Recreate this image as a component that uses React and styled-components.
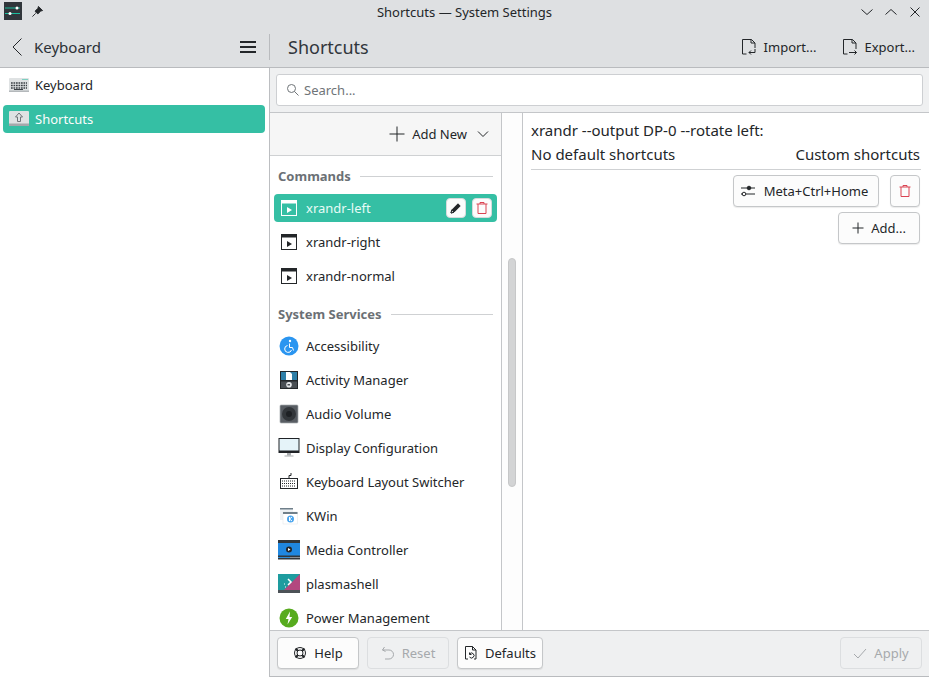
import React from 'react';
import styled, { createGlobalStyle } from 'styled-components';

const Global = createGlobalStyle`
  html, body { margin: 0; padding: 0; height: 100%; }
  body { font-family: "Noto Sans", "Open Sans", sans-serif; font-size: 13px; color: #232629; overflow: hidden; background: #eff0f1; }
  #root { height: 100%; }
  * { box-sizing: border-box; }
`;

const Win = styled.div`display: flex; flex-direction: column; width: 929px; height: 677px; background: #eff0f1;`;
const TitleBar = styled.div`position: relative; display: flex; align-items: center; height: 28px; padding: 0 4px 2px; background: #dee0e2; flex: none;`;
const AppIcon = styled.svg`width: 18px; height: 18px; display: block; margin-top: -4px;`;
const PinIcon = styled.svg`width: 13px; height: 13px; margin: -3px 0 0 9px; display: block;`;
const Title = styled.div`position: absolute; left: 0; right: 0; top: 3px; text-align: center; font-size: 13px; line-height: 18px; color: #232629;`;
const WinBtns = styled.div`margin-left: auto; display: flex; gap: 10px; padding-right: 3px; margin-top: -2px;`;
const WinBtn = styled.svg`width: 14px; height: 14px; display: block; fill: none; stroke: #232629; stroke-width: 1;`;

const Header = styled.div`display: flex; height: 40px; background: #dee0e2; border-bottom: 1px solid #b9bbbe; flex: none; padding-bottom: 1px;`;
const HeaderLeft = styled.div`width: 269px; display: flex; align-items: center; padding: 0 13px 0 11px; flex: none;`;
const Crumb = styled.span`font-size: 15px; margin-left: 5px; line-height: 20px; color: #2b3036;`;
const Hamburger = styled.svg`width: 16px; height: 12px; margin-left: auto; display: block;`;
const HeaderRight = styled.div`flex: 1; display: flex; align-items: center; padding: 0 14px 0 18px;`;
const Sep = styled.div`width: 1px; height: 26px; background: #b9bbbe; align-self: center; flex: none;`;
const PageTitle = styled.div`font-size: 18px; line-height: 24px; color: #31363b; flex: 1;`;
const HeadAction = styled.div`display: flex; align-items: center; gap: 7px; font-size: 13px; margin-left: 25px; line-height: 18px;`;
const Icon = styled.svg`width: ${p => p.$s || 16}px; height: ${p => p.$s || 16}px; display: block; flex: none; fill: none; stroke: ${p => p.$c || '#232629'}; stroke-width: 1;`;

const Body = styled.div`flex: 1; display: flex; min-height: 0;`;
const Sidebar = styled.div`width: 270px; flex: none; background: #fff; border-right: 1px solid #bcbec1; padding: 3px 4px 0 3px; display: flex; flex-direction: column;`;
const SideItem = styled.div`height: 28px; border-radius: 4px; display: flex; align-items: center; padding-left: 5px; gap: 5px; color: ${p => p.$active ? '#fcfcfc' : '#232629'}; background: ${p => p.$active ? '#35bfa4' : 'transparent'}; margin-bottom: 6px;`;
const Main = styled.div`flex: 1; display: flex; flex-direction: column; min-width: 0;`;
const SearchBar = styled.div`height: 45px; padding: 6px; border-bottom: 1px solid #c4c6c9; flex: none; background: #eff0f1;`;
const SearchField = styled.div`height: 32px; background: #fff; border: 1px solid #cdcfd2; border-radius: 3px; display: flex; align-items: center; padding-left: 9px; gap: 4px; color: #6f7478; font-size: 13px;`;
const Panes = styled.div`flex: 1; display: flex; min-height: 0; background: #fff;`;
const ListPane = styled.div`width: 232px; flex: none; border-right: 1px solid #c4c6c9; display: flex; flex-direction: column; min-height: 0; overflow: hidden;`;
const AddBar = styled.div`height: 43px; flex: none; background: #f6f6f6; border-bottom: 1px solid #cfd1d3; display: flex; align-items: center; justify-content: flex-end; padding-right: 12px;`;
const AddLabel = styled.span`margin: 0 10px 0 7px; font-size: 13px; color: #232629;`;
const List = styled.div`flex: 1; padding: 0 4px; overflow: hidden;`;
const SectionHead = styled.div`display: flex; align-items: center; gap: 9px; height: 18px; padding: 0 4px; margin: ${p => p.$first ? '11px' : '15px'} 0 9px; font-weight: 700; font-size: 13px; color: #6b7075;`;
const SectionRule = styled.div`flex: 1; height: 1px; background: #cfd1d3;`;
const Row = styled.div`height: 28px; margin-bottom: 6px; border-radius: 4px; display: flex; align-items: center; padding: 0 2px 0 4px; gap: 6px; color: ${p => p.$active ? '#e7fbf6' : '#232629'}; background: ${p => p.$active ? '#35bfa4' : 'transparent'};`;
const RowLabel = styled.span`flex: 1; line-height: 18px;`;
const MiniBtn = styled.div`width: 20px; height: 20px; background: #fcfcfc; border-radius: 4px; border: 1px solid #d8dadc; display: flex; align-items: center; justify-content: center;`;
const MiniRow = styled.div`display: flex; gap: 6px; margin-right: 3px;`;
const ScrollCol = styled.div`width: 21px; flex: none; border-right: 1px solid #c4c6c9; background: #fdfdfd; padding: 145px 1px 0; display: flex; justify-content: center;`;
const Thumb = styled.div`width: 8px; height: 229px; background: #d3d4d5; border: 1px solid #c6c7c8; border-radius: 4px;`;
const Detail = styled.div`flex: 1; padding: 7px 8px 0 8px; min-width: 0;`;
const CmdLine = styled.div`font-size: 15px; line-height: 20px; color: #232629;`;
const ColHead = styled.div`display: flex; justify-content: space-between; font-size: 15px; line-height: 20px; height: 29px; padding: 3px 1px 0 0; border-bottom: 1px solid #cfd1d3; margin-top: 1px;`;
const ShortcutRow = styled.div`display: flex; justify-content: flex-end; align-items: center; gap: 11px; margin-top: 5px; padding-right: 1px;`;
const Btn = styled.div`height: 32px; width: ${p => p.$w}px; border: 1px solid ${p => p.$off ? '#dcdee0' : '#c5c7c9'}; border-radius: 4px; background: ${p => p.$off ? 'transparent' : '#fcfcfc'}; box-shadow: ${p => p.$off ? 'none' : '0 1px 1px rgba(0,0,0,.08)'}; display: flex; align-items: center; justify-content: center; gap: ${p => p.$gap || 7}px; padding-right: ${p => p.$pr || 0}px; color: ${p => p.$off ? '#a6a9ac' : '#232629'}; font-size: 13px; flex: none;`;
const Footer = styled.div`height: 47px; flex: none; background: #eff0f1; border-top: 1px solid #c4c6c9; border-bottom: 1px solid #b9bbbe; display: flex; align-items: center; padding: 0 7px 1px; gap: 8px;`;
const Spacer = styled.div`flex: 1;`;
const SvgImg = styled.svg`width: 22px; height: 22px; display: block; flex: none;`;

const Play = ({ light }) => (
  <SvgImg viewBox="0 0 22 22">
    <rect x="3.5" y="3.5" width="15" height="15" fill={light ? 'none' : '#fff'} stroke={light ? '#fff' : '#232629'} />
    <rect x="3" y="3" width="16" height="3.5" fill={light ? '#fff' : '#232629'} />
    <path d="M9 10l5 3-5 3z" fill={light ? '#fff' : '#232629'} />
  </SvgImg>
);
const Trash = ({ s = 14 }) => (
  <Icon viewBox="0 0 14 14" $s={s} $c="#da4453"><path d="M1.5 3h11M5 3V1.5h4V3M3 3v9.500h8V3" /></Icon>
);

const services = [
  ['Accessibility', <SvgImg viewBox="0 0 22 22"><circle cx="11" cy="11" r="9.5" fill="#2a95f0" /><circle cx="12" cy="6" r="1.2" fill="#fff" /><path d="M11.500 8.500v4h3l1 3M9.500 10.500a3.500 3.500 0 1 0 4 4.500" stroke="#fff" fill="none" /></SvgImg>],
  ['Activity Manager', <SvgImg viewBox="0 0 22 22"><rect x="2" y="2" width="18" height="18" fill="#232629" /><rect x="3" y="3" width="16" height="8" fill="#2e7fa8" /><rect x="3" y="12.500" width="16" height="6.500" fill="#4a4f54" /><path d="M8 3h4l2 2v6H8z" fill="#fff" /><circle cx="11" cy="15.700" r="2.800" fill="#e5e7e9" /><path d="M9.500 15h2.500v1.500H9.500z" fill="#4a4f54" /></SvgImg>],
  ['Audio Volume', <SvgImg viewBox="0 0 22 22"><rect x="2" y="2" width="18" height="18" rx="1" fill="#585d63" stroke="#a8acb0" strokeWidth=".7" /><circle cx="11" cy="11" r="7" fill="#32363a" /><circle cx="11" cy="11" r="3" fill="#1d2024" /></SvgImg>],
  ['Display Configuration', <SvgImg viewBox="0 0 22 22"><rect x="1" y="1.500" width="20" height="14" fill="#e5f3f9" stroke="#1f2226" /><rect x="1" y="13.500" width="20" height="2.500" fill="#1f2226" /><rect x="9" y="16" width="4" height="2.500" fill="#a8abae" /><rect x="6.500" y="18.500" width="9" height="1" fill="#a8abae" /></SvgImg>],
  ['Keyboard Layout Switcher', <SvgImg viewBox="0 0 22 22"><rect x="2.500" y="7.500" width="17" height="10" fill="#fff" stroke="#232629" /><path d="M4 10h14M4 12.500h14M4 15h14" stroke="#232629" strokeDasharray="1 1" /><path d="M11 7V4.500h2V2" stroke="#232629" fill="none" /></SvgImg>],
  ['KWin', <SvgImg viewBox="0 0 22 22"><rect x="2" y="3" width="13" height="12" fill="#eef2f5" /><rect x="2" y="3" width="13" height="1.500" fill="#6f7f8a" /><rect x="5" y="7" width="14.500" height="12" fill="#fff" stroke="#dfe3e6" strokeWidth=".5" /><rect x="5" y="7" width="14.500" height="2" fill="#6f7f8a" /><circle cx="12.500" cy="14" r="3.500" fill="#4aa5ee" /><path d="M11.500 12v4M11.500 14l2.500-2M11.500 14l2.500 2" stroke="#fff" /></SvgImg>],
  ['Media Controller', <SvgImg viewBox="0 0 22 22"><rect x="0" y="1" width="22" height="19.500" fill="#31363b" /><rect x="0" y="4" width="22" height="12.500" fill="#1f87e0" /><circle cx="11" cy="10.500" r="3" fill="#232629" /><path d="M10 9l2.500 1.500L10 12z" fill="#fff" /><rect x="0" y="18" width="12" height="1" fill="#2f8fd8" /><rect x="12" y="18" width="10" height="1" fill="#8b9095" /></SvgImg>],
  ['plasmashell', <SvgImg viewBox="0 0 22 22"><path d="M0 1h22v19H0z" fill="#1e9c9f" /><path d="M22 1v16H6z" fill="#b3487f" /><path d="M10 6l3 3-3 3" stroke="#fff" strokeWidth="1.500" fill="none" /><path d="M6 11h1M7 14h1" stroke="#fff" /><rect x="0" y="17" width="22" height="3" fill="#4c5257" /></SvgImg>],
  ['Power Management', <SvgImg viewBox="0 0 22 22"><circle cx="11" cy="11" r="9.500" fill="#57ab1e" /><path d="M12 4.500L7.800 12H10.500l-1 5.500L14.200 10H11.500z" fill="#fff" /></SvgImg>],
];

export default function App() {
  return (
    <Win>
      <Global />
      <TitleBar>
        <AppIcon viewBox="0 0 18 18">
          <rect width="18" height="18" fill="#31363b" />
          <path d="M1 6h15M1 11.500h15" stroke="#1abc9c" />
          <circle cx="13" cy="6" r="1.500" fill="#fff" /><circle cx="6" cy="11.500" r="1.500" fill="#fff" />
        </AppIcon>
        <PinIcon viewBox="0 0 14 14"><path d="M8 1.500l4.500 4.500-2 .5-3 3-1-.5-1.500-1.500-.5-1 3-3zM5 9l-3.500 3.500" fill="#232629" stroke="#232629" /></PinIcon>
        <Title>Shortcuts — System Settings</Title>
        <WinBtns>
          <WinBtn viewBox="0 0 14 14"><path d="M1.500 4.500l5.500 5 5.500-5" /></WinBtn>
          <WinBtn viewBox="0 0 14 14"><path d="M1.500 9.500l5.500-5 5.500 5" /></WinBtn>
          <WinBtn viewBox="0 0 14 14"><path d="M2.500 2.500l9 9M11.500 2.500l-9 9" /></WinBtn>
        </WinBtns>
      </TitleBar>
      <Header>
        <HeaderLeft>
          <Icon viewBox="0 0 18 18" $s={18}><path d="M10.500.5L2 9l8.500 8.500" /></Icon>
          <Crumb>Keyboard</Crumb>
          <Hamburger viewBox="0 0 16 12"><path d="M0 1h16M0 6h16M0 11h16" stroke="#232629" strokeWidth="2" /></Hamburger>
        </HeaderLeft>
        <Sep />
        <HeaderRight>
          <PageTitle>Shortcuts</PageTitle>
          <HeadAction>
            <Icon viewBox="0 0 16 16"><path d="M5.500 15H1.500V.5h9l3.500 3.500v5M10 .5V4h4" /><path d="M14 10v3.500H8M10 11.500l-2 2 2 2" /></Icon>
            Import...
          </HeadAction>
          <HeadAction>
            <Icon viewBox="0 0 16 16"><path d="M5.500 15H1.500V.5h9l3.500 3.500v6M10 .5V4h4" /><path d="M7 13.500h7.500M12.500 11.500l2 2-2 2" /></Icon>
            Export...
          </HeadAction>
        </HeaderRight>
      </Header>
      <Body>
        <Sidebar>
          <SideItem>
            <SvgImg viewBox="0 0 22 22"><rect x="1" y="4" width="20" height="14" rx="1" fill="#dfe2e3" /><rect x="1" y="16.500" width="20" height="1.500" fill="#b4b8bb" /><path d="M3 9h16M3 11.500h16M3 14h16" stroke="#3b4045" strokeWidth="1.500" strokeDasharray="1.700 .8" /><path d="M6 15.500h9" stroke="#3b4045" strokeWidth="1" /><path d="M14.500 5.500h5" stroke="#1abc9c" strokeDasharray="1 1" /></SvgImg>
            Keyboard
          </SideItem>
          <SideItem $active>
            <SvgImg viewBox="0 0 22 22"><rect x="1" y="3" width="20" height="15" rx="1" fill="#dfe2e3" /><rect x="1" y="15.500" width="20" height="2.500" fill="#a4a8ab" /><path d="M11 5l3.500 4h-2v4.500h-3V9h-2z" fill="none" stroke="#6f7478" /></SvgImg>
            Shortcuts
          </SideItem>
        </Sidebar>
        <Main>
          <SearchBar>
            <SearchField>
              <Icon viewBox="0 0 14 14" $s={14} $c="#6f7478"><circle cx="5.500" cy="5.500" r="4" /><path d="M8.500 8.500l4 4" /></Icon>
              Search...
            </SearchField>
          </SearchBar>
          <Panes>
            <ListPane>
              <AddBar>
                <Icon viewBox="0 0 16 16"><path d="M8 .5v15M.5 8h15" /></Icon>
                <AddLabel>Add New</AddLabel>
                <Icon viewBox="0 0 12 12" $s={12}><path d="M1 3.500l5 5 5-5" /></Icon>
              </AddBar>
              <List>
                <SectionHead $first>Commands<SectionRule /></SectionHead>
                <Row $active>
                  <Play light /><RowLabel>xrandr-left</RowLabel>
                  <MiniRow>
                    <MiniBtn><Icon viewBox="0 0 14 14" $s={14}><path d="M2 12l.8-3L9 2.800l2.200 2.200L5 11.200z" fill="#232629" /><path d="M2 12l.8-3 2.200 2.200z" fill="#fff" /></Icon></MiniBtn>
                    <MiniBtn><Trash /></MiniBtn>
                  </MiniRow>
                </Row>
                <Row><Play /><RowLabel>xrandr-right</RowLabel></Row>
                <Row><Play /><RowLabel>xrandr-normal</RowLabel></Row>
                <SectionHead>System Services<SectionRule /></SectionHead>
                {services.map(([name, icon]) => (
                  <Row key={name}>{icon}<RowLabel>{name}</RowLabel></Row>
                ))}
              </List>
            </ListPane>
            <ScrollCol><Thumb /></ScrollCol>
            <Detail>
              <CmdLine>xrandr --output DP-0 --rotate left:</CmdLine>
              <ColHead><span>No default shortcuts</span><span>Custom shortcuts</span></ColHead>
              <ShortcutRow>
                <Btn $w={146} $gap={8} $pr={4}>
                  <Icon viewBox="0 0 16 16" $s={16}><path d="M1 5h14M1 11h14" /><circle cx="9" cy="5" r="1.800" fill="#232629" /><circle cx="4" cy="11" r="1.800" fill="#fcfcfc" /></Icon>
                  <span>Meta+Ctrl+Home</span>
                </Btn>
                <Btn $w={30}><Trash /></Btn>
              </ShortcutRow>
              <ShortcutRow>
                <Btn $w={82}>
                  <Icon viewBox="0 0 12 12" $s={12}><path d="M6 .5v11M.5 6h11" /></Icon>
                  <span>Add...</span>
                </Btn>
              </ShortcutRow>
            </Detail>
          </Panes>
          <Footer>
            <Btn $w={82}>
              <Icon viewBox="0 0 14 14" $s={14}><circle cx="7" cy="7" r="5.500" /><circle cx="7" cy="7" r="3" /><path d="M2.500 2.500l2.500 2.500M11.500 2.500L9 5M2.500 11.500L5 9M11.500 11.500L9 9" strokeWidth="2.200" /></Icon>
              <span>Help</span>
            </Btn>
            <Btn $w={82} $off>
              <Icon viewBox="0 0 14 14" $s={14} $c="#a6a9ac"><path d="M3.500 1L1.500 4l3 1.500M1.500 4H8a4.500 4.500 0 0 1 0 9H4" /></Icon>
              <span>Reset</span>
            </Btn>
            <Btn $w={86}>
              <Icon viewBox="0 0 14 14" $s={14}><path d="M4 13H1.500V.5h7L12 4v9h-2M8.500.5V4H12" /><path d="M5.500 8a2.500 2.500 0 1 1 0 3M5.500 6.500V8.500H7.500" /></Icon>
              <span>Defaults</span>
            </Btn>
            <Spacer />
            <Btn $w={82} $off>
              <Icon viewBox="0 0 14 14" $s={14} $c="#a6a9ac"><path d="M1 8l4 4 8-9" /></Icon>
              <span>Apply</span>
            </Btn>
          </Footer>
        </Main>
      </Body>
    </Win>
  );
}
